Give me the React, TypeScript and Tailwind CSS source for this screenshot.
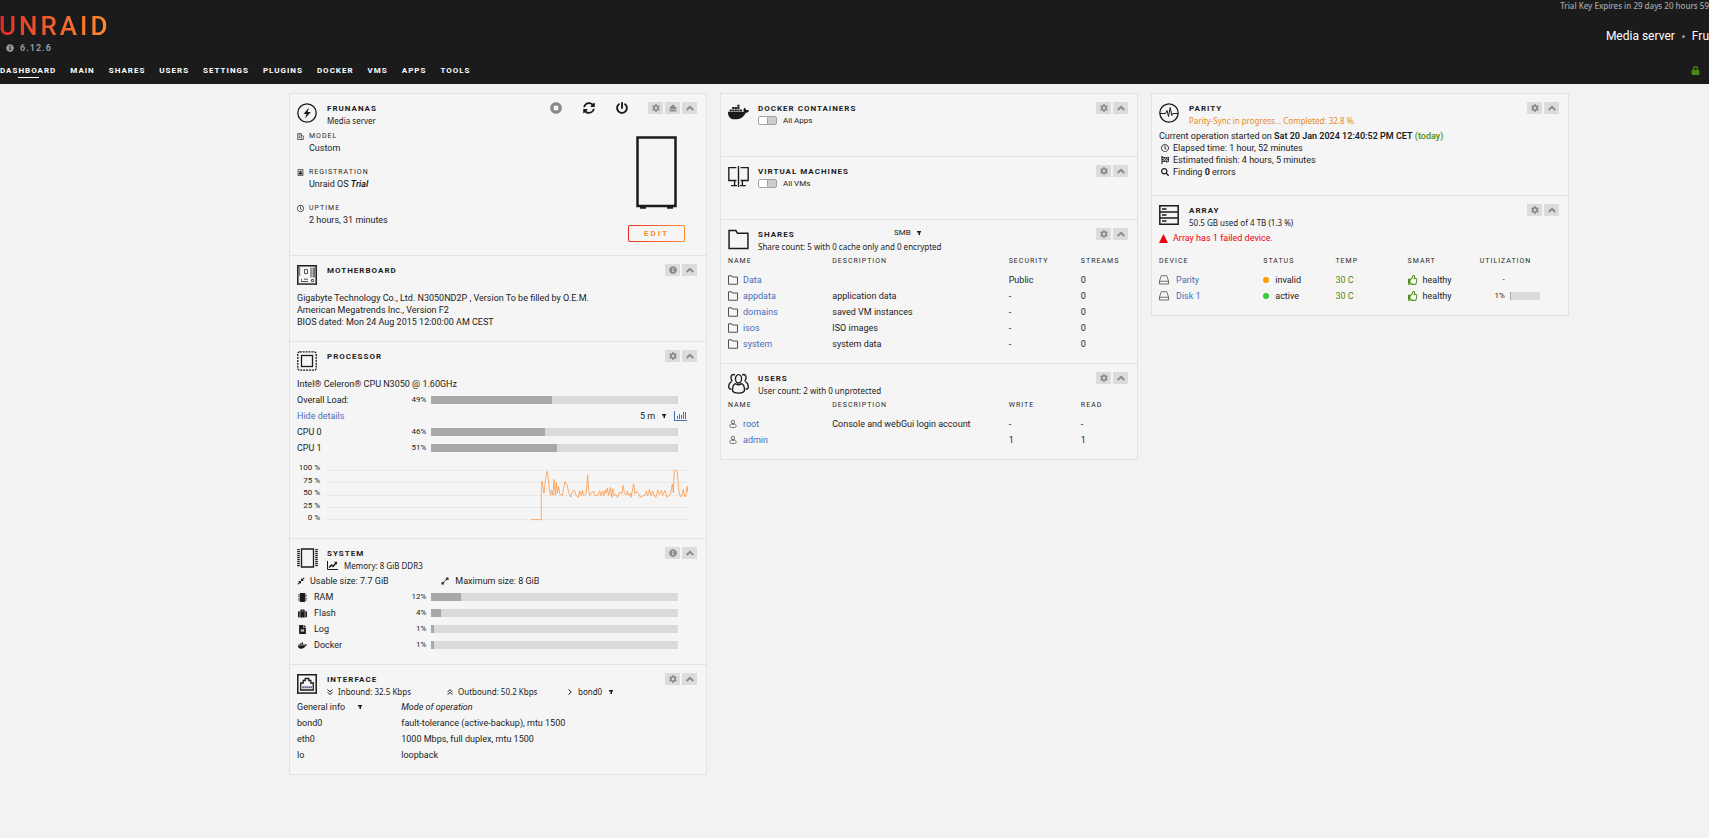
import type { ReactNode } from 'react';
import {
    FaCog,
    FaCompressAlt,
    FaDocker,
    FaEject,
    FaExpandAlt,
    FaFileAlt,
    FaFlagCheckered,
    FaInfoCircle,
    FaLock,
    FaPowerOff,
    FaRegClock,
    FaRegThumbsUp,
    FaSearch,
    FaStopCircle,
    FaSuitcase,
    FaSyncAlt,
    FaMicrochip,
} from 'react-icons/fa';

const menu = ['Dashboard', 'Main', 'Shares', 'Users', 'Settings', 'Plugins', 'Docker', 'VMs', 'Apps', 'Tools'];

const shares = [
    { name: 'Data', description: '', security: 'Public', streams: 0 },
    { name: 'appdata', description: 'application data', security: '-', streams: 0 },
    { name: 'domains', description: 'saved VM instances', security: '-', streams: 0 },
    { name: 'isos', description: 'ISO images', security: '-', streams: 0 },
    { name: 'system', description: 'system data', security: '-', streams: 0 },
];

const users = [
    { name: 'root', description: 'Console and webGui login account', write: '-', read: '-' },
    { name: 'admin', description: '', write: '1', read: '1' },
];

const devices = [
    { name: 'Parity', status: 'invalid', dot: 'bg-[#ff9900]', temp: '30 C', smart: 'healthy', used: null },
    { name: 'Disk 1', status: 'active', dot: 'bg-[#33cc33]', temp: '30 C', smart: 'healthy', used: 1 },
];

const memory = [
    { name: 'RAM', icon: FaMicrochip, value: 12 },
    { name: 'Flash', icon: FaSuitcase, value: 4 },
    { name: 'Log', icon: FaFileAlt, value: 1 },
    { name: 'Docker', icon: FaDocker, value: 1 },
];

const interfaces = [
    { name: 'bond0', mode: 'fault-tolerance (active-backup), mtu 1500' },
    { name: 'eth0', mode: '1000 Mbps, full duplex, mtu 1500' },
    { name: 'lo', mode: 'loopback' },
];

const cpuHistory =
    '615,173 646,173 646,84 648,57 654,94 659,49 663,28 667,49 670,84 674,100 677,84 681,100 684,52 688,100 691,61 694,94 698,74 701,96 709,100 713,79 717,59 723,69 729,94 734,105 739,90 745,84 750,100 757,106 761,87 765,100 769,85 773,101 781,94 785,40 788,84 791,100 797,92 803,87 807,101 817,99 821,86 825,101 830,87 834,100 838,84 841,94 844,79 848,100 853,76 857,106 860,80 865,101 869,97 875,106 880,90 887,96 891,70 895,93 901,99 904,87 908,100 913,94 915,106 923,66 927,96 932,87 937,94 943,106 949,102 957,100 961,87 965,101 970,82 975,101 980,87 985,102 990,106 995,84 1000,98 1006,85 1010,100 1017,85 1023,106 1033,98 1039,66 1042,92 1045,26 1049,24 1054,28 1058,84 1063,104 1068,101 1072,82 1076,105 1080,100 1083,73 1086,92';

const labelClass = 'text-[7px] leading-[13px] tracking-[1px] uppercase text-[#282828]';
const linkClass = 'text-[#486dba] hover:underline';

/* ---------- icons ---------- */

function Line({ children, className = 'size-5' }: { children: ReactNode; className?: string }) {
    return (
        <svg viewBox="0 0 20 20" className={className} fill="none" stroke="currentColor" strokeWidth="1.5" aria-hidden="true">
            {children}
        </svg>
    );
}

const ServerIcon = () => (
    <Line>
        <circle cx="10" cy="10" r="9.2" strokeWidth="1.3" />
        <path d="M12 4.5 6.5 11h3L8 15.5 13.8 9h-3.2z" fill="currentColor" stroke="none" />
    </Line>
);

const BoardIcon = () => (
    <Line>
        <path d="M.8.8h18.4v18.4H.8z" />
        <path d="M13 2.5h2.2v10H13z" fill="#999" stroke="none" />
        <path d="M15.600 2.500H18v10h-2.400z" fill="#777" stroke="none" />
        <path d="M7.500 4.500h3v4h-3zM14.500 14.500h2v2h-2z" strokeWidth="1" stroke="#555" />
        <path d="M4.500 14v2.500H11M7 14.200h4" strokeWidth="1" stroke="#555" />
        <path d="M2.500 2.500v8.500" strokeWidth="1.500" strokeDasharray="1 1" />
        <path d="M1 18.800h18" stroke="#666" strokeWidth="1.800" />
    </Line>
);

const CpuIcon = () => (
    <Line>
        <rect x=".8" y=".8" width="18.400" height="18.400" rx="2" strokeDasharray="2 .9" strokeWidth="1.300" />
        <rect x="4.500" y="4.500" width="11" height="11" strokeWidth="1.300" />
    </Line>
);

const RamIcon = () => (
    <Line className="h-5 w-[21px]">
        <path d="M4 1h12v18H4z" strokeWidth="1.300" />
        <path d="M1 1v18M19 1v18" strokeWidth="2.500" strokeDasharray="1.300 .7" />
    </Line>
);

const EthernetIcon = () => (
    <Line>
        <path d="M.8.8h18.400v18.400H.8z" />
        <path d="M3.700 16V9h2.500V6.500h2V4.500h3.600v2h2V9h2.500v7z" strokeWidth="1.300" />
        <path d="M5.500 13.300h9.500" stroke="#1f2d6b" strokeWidth="2" strokeDasharray="1.200 .8" />
        <path d="M1 19h18" stroke="#555" strokeWidth="1.500" />
    </Line>
);

const VmIcon = () => (
    <Line className="size-[21px]">
        <path d="M8 1.500H.8v12.300H8M12 1.500h7.200v12.300H12M10 0v20" strokeWidth="1.300" />
        <path d="M6.300 14v4.500M13.700 14v4.500M3 18.700h5.500M11.500 18.700H17" strokeWidth="1.300" />
    </Line>
);

const FolderIcon = ({ className, strokeWidth = 1.4 }: { className?: string; strokeWidth?: number }) => (
    <Line className={className}>
        <path d="M1 1.500h6.500l1.500 2.500h10v14.500H1z" strokeWidth={strokeWidth} />
    </Line>
);

const UsersIcon = () => (
    <Line className="size-[21px]">
        <g strokeWidth="1.300">
            <ellipse cx="10" cy="5.500" rx="2.900" ry="4" />
            <path d="M7.300 10.200c-2 .6-3 2-3 6 0 1.800 2.500 3 5.700 3s5.700-1.200 5.700-3c0-4-1-5.400-3-6-1.700 1.300-3.700 1.300-5.400 0z" />
            <path d="M6.500 2C4.500.6 2.700 2 2.800 4.500c0 1.500.6 2.700 1.400 3.400M13.500 2c2-1.400 3.800 0 3.700 2.500 0 1.500-.6 2.700-1.400 3.400" />
            <path d="M3.500 8.200C1.500 9 .7 10.500.7 13.500c0 1 .9 1.700 2.600 2M16.500 8.200c2 .8 2.800 2.300 2.800 5.300 0 1-.9 1.700-2.600 2" />
        </g>
    </Line>
);

const PulseIcon = () => (
    <Line>
        <circle cx="10" cy="10" r="9.200" strokeWidth="1.300" />
        <path d="M1 10.500h5.500L8 7.500l1.500 6 1.700-9 1.600 8 1-2H19" strokeWidth="1" />
    </Line>
);

const ArrayIcon = () => (
    <Line>
        <path d="M.8.8h18.400v18.400H.8zM.8 7h18.400M.8 13h18.400" />
        <path d="M3 4h4.500M3 10h4.500M3 16h4.500" strokeWidth="1.300" />
    </Line>
);

const UserIcon = () => (
    <Line className="h-[10px] w-2 text-[#505050]">
        <ellipse cx="10" cy="5" rx="4" ry="4.500" strokeWidth="2" />
        <path d="M6 10c-3 1-4 3-4 5.500C2 18 5 19 10 19s8-1 8-3.500c0-2.500-1-4.500-4-5.500-2.500 1.800-5.500 1.800-8 0z" strokeWidth="2" />
    </Line>
);

const DiskIcon = () => (
    <Line className="size-[10px] text-[#606060]">
        <path d="M4.500 1.500h11L19 12v6H1v-6zM1 12.500h18" strokeWidth="1.800" />
    </Line>
);

const CaseIcon = () => (
    <svg viewBox="0 0 41 73" className="h-[73px] w-[41px]" aria-hidden="true">
        <path d="M1.500 1.500h38v68.500h-38z" fill="none" stroke="#1c1b1b" strokeWidth="2.500" />
        <path d="M4 71.500h6M31 71.500h6" stroke="#1c1b1b" strokeWidth="2.500" />
    </svg>
);

const BarsIcon = () => (
    <svg viewBox="0 0 13 10" className="h-[10px] w-[13px]" fill="none" stroke="#486dba" shapeRendering="crispEdges" aria-hidden="true">
        <path d="M.5 0v9.500H13" />
        <path d="M3.500 5v3M5.500 3v5M7.500 4v4M9.500 1v7M11.500 1v7" strokeWidth="1" />
    </svg>
);

const TrendIcon = () => (
    <svg viewBox="0 0 11 9" className="h-[9px] w-[11px]" fill="none" stroke="currentColor" aria-hidden="true">
        <path d="M.5 0v8.500H11" />
        <path d="M2 6.500 4.500 4 6 5.500l3-3.500" strokeWidth="1.500" />
        <path d="M7 .8h3v3z" fill="currentColor" stroke="none" />
    </svg>
);

const ChevronUpIcon = ({ className }: { className?: string }) => (
    <svg viewBox="0 0 8 8" className={className} fill="none" stroke="currentColor" strokeWidth="2" aria-hidden="true">
        <path d="M.7 6 4 2.800 7.300 6" />
    </svg>
);

const Chevrons = ({ up }: { up?: boolean }) => (
    <svg viewBox="0 0 6 6" className="size-[6px]" fill="none" stroke="currentColor" strokeWidth="1" aria-hidden="true">
        <path d={up ? 'M.5 3 3 .7 5.500 3M.5 5.700 3 3.400l2.500 2.300' : 'M.5.5 3 2.800 5.500.5M.5 3.200 3 5.500l2.500-2.300'} />
    </svg>
);

/* ---------- shared pieces ---------- */

function SmallSelect({ label, value, className = '', arrow = 'ml-[6px]' }: { label: string; value: string; className?: string; arrow?: string }) {
    return (
        <label className={`inline-flex items-center ${className}`}>
            <select aria-label={label} className="appearance-none bg-transparent outline-none">
                <option>{value}</option>
            </select>
            <svg viewBox="0 0 4 4" className={`size-1 ${arrow}`} aria-hidden="true">
                <path d="M0 0h4v1.500H3V4H1.500V1.500H0z" fill="#1c1b1b" />
            </svg>
        </label>
    );
}

const tools = {
    settings: FaCog,
    info: FaInfoCircle,
    eject: FaEject,
    collapse: ChevronUpIcon,
};

type Tool = keyof typeof tools;

interface TileProps {
    icon: ReactNode;
    title: string;
    subtitle?: ReactNode;
    controls?: Tool[];
    extra?: ReactNode;
    children?: ReactNode;
}

function Tile({ icon, title, subtitle, controls = ['settings'], extra, children }: TileProps) {
    return (
        <section className="pt-2 pr-2 pb-[11px] pl-[7px]">
            <header className="flex h-[26px] items-start">
                <div className="mt-px w-5 shrink-0">{icon}</div>
                <div className="ml-[10px] min-w-0 flex-1 whitespace-nowrap">
                    <h2 className="text-[8px] leading-[13px] font-bold tracking-[1px] uppercase">{title}</h2>
                    <div className="font-['Noto_Sans',sans-serif] text-[8px] leading-[11px]">{subtitle}</div>
                </div>
                {extra}
                <div className="mr-px flex gap-[2px]">
                    {[...controls, 'collapse' as Tool].map((name) => {
                        const Icon = tools[name];
                        return (
                            <button
                                key={name}
                                aria-label={`${title} ${name}`}
                                className="flex h-3 w-[15px] items-center justify-center bg-[#dcdcdc] text-[#8b8b8b] hover:text-[#1c1b1b]"
                            >
                                <Icon className="size-2" />
                            </button>
                        );
                    })}
                </div>
            </header>
            {children}
        </section>
    );
}

function Column({ children }: { children: ReactNode }) {
    return <div className="divide-y divide-[#e2e2e2] self-start border border-[#e2e2e2] bg-[#f5f5f5]">{children}</div>;
}

function Meter({ label, value }: { label: ReactNode; value: number }) {
    return (
        <div className="flex h-4 items-center">
            <div className="w-[26%]">{label}</div>
            <div className="w-[25px] text-right text-[8px]">{value}%</div>
            <div className="mr-5 ml-[5px] h-2 flex-1 bg-[#dadada]">
                <div className="h-full bg-[#a8a8a8]" style={{ width: `${value}%` }} />
            </div>
        </div>
    );
}

function Toggle({ label }: { label: string }) {
    return (
        <label className="mt-px flex items-center">
            <input type="checkbox" className="peer sr-only" />
            <span className="flex h-[9px] w-[19px] rounded-[2px] border border-[#a0a0a0] bg-[#cccccc] peer-checked:justify-end">
                <span className="w-[9px] rounded-[1px] border-r border-[#a0a0a0] bg-white" />
            </span>
            <span className="ml-[6px] font-['Roboto',sans-serif] leading-[9px]">{label}</span>
        </label>
    );
}

function Fact({ icon, label, children }: { icon: ReactNode; label: string; children: ReactNode }) {
    return (
        <div className="flex">
            <div className="mt-[3px] w-3 shrink-0">{icon}</div>
            <dl>
                <dt className={labelClass}>{label}</dt>
                <dd className="leading-[11px]">{children}</dd>
            </dl>
        </div>
    );
}

function Table({ head, children }: { head: [string, string][]; children: ReactNode }) {
    return (
        <table className="w-full table-fixed text-left">
            <thead>
                <tr className="h-[18px]">
                    {head.map(([title, width]) => (
                        <th key={title} className={`px-0 pt-px pb-0 align-top font-normal ${labelClass} ${width}`}>
                            {title}
                        </th>
                    ))}
                </tr>
            </thead>
            <tbody>{children}</tbody>
        </table>
    );
}

/* ---------- page ---------- */

export default function App() {
    return (
        <div className="min-h-screen overflow-x-hidden bg-[#f2f2f2] pb-16 font-['Roboto',sans-serif] text-[9px] leading-3 text-[#1c1b1b]">
            <header className="flex h-[84px] justify-between bg-[#1c1b1b] text-white">
                <div>
                    <a
                        href="#"
                        className="mt-[11px] -ml-px block w-fit bg-gradient-to-r from-[#e22828] to-[#ff8c2f] bg-clip-text text-[26px] leading-[30px] font-medium tracking-[3px] text-transparent"
                    >
                        UNRAID
                    </a>
                    <div className="mt-px ml-[6px] flex items-center gap-[6px] leading-3 font-bold tracking-[1px] text-[#999999]">
                        <FaInfoCircle className="size-2" />
                        6.12.6
                    </div>
                    <nav className="mt-[10px] flex gap-[14px]">
                        {menu.map((item, i) => (
                            <a key={item} href="#" className="flex flex-col items-center text-[8px] leading-[13px] font-bold tracking-[1px] uppercase">
                                {item}
                                {i === 0 && <span className="h-px w-[21px] bg-white" />}
                            </a>
                        ))}
                    </nav>
                </div>
                <div className="flex flex-col items-end">
                    <div className="font-['Noto_Sans',sans-serif] text-[8px] leading-3 font-medium text-[#a6a6a6]">
                        Trial Key Expires in 29 days 20 hours 59
                    </div>
                    <div className="mt-4 flex items-center text-[12px] leading-4">
                        Media server
                        <span className="mx-[7px] size-[3px] rounded-full bg-[#999999]" />
                        Fru
                    </div>
                    <FaLock className="mt-[22px] mr-[9px] size-[9px] text-[#4f8a10]" />
                </div>
            </header>

            <main className="mt-[9px] mr-[140px] ml-[289px] grid grid-cols-3 gap-[13px]">
                <Column>
                    <Tile
                        icon={<ServerIcon />}
                        title="Frunanas"
                        subtitle="Media server"
                        controls={['settings', 'eject']}
                        extra={
                            <div className="mr-5 flex gap-[21px]">
                                <button aria-label="Stop array" className="text-[#888888]">
                                    <FaStopCircle className="size-3" />
                                </button>
                                <button aria-label="Reboot">
                                    <FaSyncAlt className="size-3" />
                                </button>
                                <button aria-label="Power down">
                                    <FaPowerOff className="size-3" />
                                </button>
                            </div>
                        }
                    >
                        <div className="mb-[2px] flex justify-between">
                            <div className="mt-[2px] flex flex-col gap-3">
                                <Fact
                                    label="Model"
                                    icon={
                                        <Line className="size-[7px]">
                                            <path d="M2 1h10v18H2zM12 6l6 3v10h-6M5 5h4M5 9h4M5 13h4" strokeWidth="2" />
                                        </Line>
                                    }
                                >
                                    Custom
                                </Fact>
                                <Fact
                                    label="Registration"
                                    icon={
                                        <Line className="size-[7px]">
                                            <path d="M3 1h14v18H3z" strokeWidth="2" />
                                            <path d="M7 5h6v5H7zM5 11h10v5H5z" fill="currentColor" stroke="none" />
                                        </Line>
                                    }
                                >
                                    Unraid OS <strong className="font-semibold italic">Trial</strong>
                                </Fact>
                                <Fact label="Uptime" icon={<FaRegClock className="size-[7px]" />}>
                                    2 hours, 31 minutes
                                </Fact>
                            </div>
                            <div className="mt-2 mr-[13px] flex flex-col items-center gap-4">
                                <CaseIcon />
                                <button className="h-[17px] w-[57px] rounded-[2px] bg-gradient-to-r from-[#e22828] to-[#ff8c2f] p-px">
                                    <span className="flex h-full items-center justify-center rounded-[1px] bg-[#f5f5f5] text-[8px] font-bold tracking-[2px] text-[#ff8c2f] uppercase">
                                        Edit
                                    </span>
                                </button>
                            </div>
                        </div>
                    </Tile>

                    <Tile icon={<BoardIcon />} title="Motherboard" controls={['info']}>
                        <div className="my-[2px]">
                            <p>Gigabyte Technology Co., Ltd. N3050ND2P , Version To be filled by O.E.M.</p>
                            <p>American Megatrends Inc., Version F2</p>
                            <p>BIOS dated: Mon 24 Aug 2015 12:00:00 AM CEST</p>
                        </div>
                    </Tile>

                    <Tile icon={<CpuIcon />} title="Processor">
                        <p className="leading-4">Intel® Celeron® CPU N3050 @ 1.60GHz</p>
                        <Meter label="Overall Load:" value={49} />
                        <div className="flex h-4 items-center">
                            <a href="#" className={`flex-1 ${linkClass}`}>
                                Hide details
                            </a>
                            <SmallSelect label="Time span" value="5 m" />
                            <button aria-label="Toggle graph" className="mr-[11px] ml-2">
                                <BarsIcon />
                            </button>
                        </div>
                        <Meter label="CPU 0" value={46} />
                        <Meter label="CPU 1" value={51} />
                        <div className="mt-[6px] mb-[3px] flex">
                            <div className="flex h-[62px] w-[23px] flex-col justify-between text-right text-[8px] leading-3">
                                {[100, 75, 50, 25, 0].map((tick) => (
                                    <span key={tick}>{tick} %</span>
                                ))}
                            </div>
                            <svg
                                viewBox="0 0 1086 186"
                                preserveAspectRatio="none"
                                className="mr-[10px] ml-[6px] h-[62px] min-w-0 flex-1"
                                fill="none"
                                role="img"
                                aria-label="CPU load"
                            >
                                <path d="M0 25.500h1086M0 61.500h1086M0 100.500h1086M0 136.500h1086M0 172.500h1086" stroke="#e8e8e8" vectorEffect="non-scaling-stroke" />
                                <polyline points={cpuHistory} stroke="#ff8c2f" strokeOpacity=".7" vectorEffect="non-scaling-stroke" />
                            </svg>
                        </div>
                    </Tile>

                    <Tile
                        icon={<RamIcon />}
                        title="System"
                        controls={['info']}
                        subtitle={
                            <span className="flex items-center gap-[6px]">
                                <TrendIcon />
                                Memory: 8 GiB DDR3
                            </span>
                        }
                    >
                        <div className="flex h-4 items-center">
                            <span className="flex w-[36%] items-center gap-[5px]">
                                <FaCompressAlt className="size-2" />
                                Usable size: 7.7 GiB
                            </span>
                            <span className="flex items-center gap-[6px]">
                                <FaExpandAlt className="size-2" />
                                Maximum size: 8 GiB
                            </span>
                        </div>
                        {memory.map(({ name, icon: Icon, value }) => (
                            <Meter
                                key={name}
                                value={value}
                                label={
                                    <span className="ml-px flex items-center gap-[7px]">
                                        <Icon className="size-[9px]" />
                                        {name}
                                    </span>
                                }
                            />
                        ))}
                    </Tile>

                    <Tile
                        icon={<EthernetIcon />}
                        title="Interface"
                        subtitle={
                            <span className="flex items-center">
                                <span className="flex w-[120px] items-center gap-[5px]">
                                    <Chevrons />
                                    Inbound: 32.5 Kbps
                                </span>
                                <span className="flex w-[121px] items-center gap-[5px]">
                                    <Chevrons up />
                                    Outbound: 50.2 Kbps
                                </span>
                                <svg viewBox="0 0 4 6" className="mr-[6px] h-[6px] w-1" fill="none" stroke="currentColor" aria-hidden="true">
                                    <path d="M.5.5 3.300 3 .5 5.500" />
                                </svg>
                                <SmallSelect label="Port" value="bond0" />
                            </span>
                        }
                    >
                        <div className="flex h-4 items-center">
                            <SmallSelect label="View" value="General info" className="w-[26%]" arrow="ml-3" />
                            <em>Mode of operation</em>
                        </div>
                        {interfaces.map((port) => (
                            <div key={port.name} className="flex h-4 items-center">
                                <span className="w-[26%]">{port.name}</span>
                                {port.mode}
                            </div>
                        ))}
                    </Tile>
                </Column>

                <Column>
                    <Tile icon={<FaDocker className="h-[18px] w-[21px]" />} title="Docker Containers" subtitle={<Toggle label="All Apps" />}>
                        <div className="h-[17px]" />
                    </Tile>

                    <Tile icon={<VmIcon />} title="Virtual Machines" subtitle={<Toggle label="All VMs" />}>
                        <div className="h-[17px]" />
                    </Tile>

                    <Tile
                        icon={<FolderIcon className="size-[21px]" />}
                        title="Shares"
                        subtitle="Share count: 5 with 0 cache only and 0 encrypted"
                        extra={<SmallSelect label="Protocol" value="SMB" className="mr-[175px] text-[8px] leading-[10px]" />}
                    >
                        <Table
                            head={[
                                ['Name', 'w-[26%]'],
                                ['Description', 'w-[44%]'],
                                ['Security', 'w-[18%]'],
                                ['Streams', 'w-[12%]'],
                            ]}
                        >
                            {shares.map((share) => (
                                <tr key={share.name} className="h-4">
                                    <td className="p-0">
                                        <span className="flex items-center gap-[5px]">
                                            <FolderIcon className="size-[10px] text-[#505050]" strokeWidth={2} />
                                            <a href="#" className={linkClass}>
                                                {share.name}
                                            </a>
                                        </span>
                                    </td>
                                    <td className="p-0">{share.description}</td>
                                    <td className="p-0">{share.security}</td>
                                    <td className="p-0">{share.streams}</td>
                                </tr>
                            ))}
                        </Table>
                    </Tile>

                    <Tile icon={<UsersIcon />} title="Users" subtitle="User count: 2 with 0 unprotected">
                        <Table
                            head={[
                                ['Name', 'w-[26%]'],
                                ['Description', 'w-[44%]'],
                                ['Write', 'w-[18%]'],
                                ['Read', 'w-[12%]'],
                            ]}
                        >
                            {users.map((user) => (
                                <tr key={user.name} className="h-4">
                                    <td className="p-0">
                                        <span className="ml-px flex items-center gap-[6px]">
                                            <UserIcon />
                                            <a href="#" className={linkClass}>
                                                {user.name}
                                            </a>
                                        </span>
                                    </td>
                                    <td className="p-0">{user.description}</td>
                                    <td className="p-0">{user.write}</td>
                                    <td className="p-0">{user.read}</td>
                                </tr>
                            ))}
                        </Table>
                    </Tile>
                </Column>

                <Column>
                    <Tile
                        icon={<PulseIcon />}
                        title="Parity"
                        subtitle={<span className="text-[#e68a1e]">Parity-Sync in progress... Completed: 32.8 %.</span>}
                    >
                        <div className="mt-[2px] mb-[6px]">
                            <p>
                                Current operation started on <strong className="font-semibold">Sat 20 Jan 2024 12:40:52 PM CET</strong>{' '}
                                <span className="font-medium text-[#4f8a10]">(today)</span>
                            </p>
                            <p className="ml-[2px] flex items-center gap-1">
                                <FaRegClock className="size-2" />
                                Elapsed time: 1 hour, 52 minutes
                            </p>
                            <p className="ml-[2px] flex items-center gap-1">
                                <FaFlagCheckered className="size-2" />
                                Estimated finish: 4 hours, 5 minutes
                            </p>
                            <p className="ml-[2px] flex items-center gap-1">
                                <FaSearch className="size-2" />
                                <span>
                                    Finding <strong>0</strong> errors
                                </span>
                            </p>
                        </div>
                    </Tile>

                    <Tile icon={<ArrayIcon />} title="Array" subtitle="50.5 GB used of 4 TB (1.3 %)">
                        <p className="mb-2 flex h-4 items-center gap-[5px] text-[#f0000c]">
                            <svg viewBox="0 0 9 9" className="size-[9px]" aria-hidden="true">
                                <path d="M4.500 0 9 9H0z" fill="currentColor" />
                            </svg>
                            Array has 1 failed device.
                        </p>
                        <Table
                            head={[
                                ['Device', 'w-[26%]'],
                                ['Status', 'w-[18%]'],
                                ['Temp', 'w-[18%]'],
                                ['Smart', 'w-[18%]'],
                                ['Utilization', 'w-[20%]'],
                            ]}
                        >
                            {devices.map((device) => (
                                <tr key={device.name} className="h-4">
                                    <td className="p-0">
                                        <span className="flex items-center gap-[7px]">
                                            <DiskIcon />
                                            <a href="#" className={linkClass}>
                                                {device.name}
                                            </a>
                                        </span>
                                    </td>
                                    <td className="p-0">
                                        <span className="flex items-center gap-[6px]">
                                            <span className={`size-[6px] rounded-full ${device.dot}`} />
                                            {device.status}
                                        </span>
                                    </td>
                                    <td className="p-0 text-[#4f8a10]">{device.temp}</td>
                                    <td className="p-0">
                                        <span className="flex items-center gap-[5px]">
                                            <FaRegThumbsUp className="size-[10px] text-[#4f8a10]" />
                                            {device.smart}
                                        </span>
                                    </td>
                                    <td className="p-0">
                                        <span className="flex items-center">
                                            <span className="w-[25px] text-right text-[8px]">{device.used === null ? '-' : `${device.used}%`}</span>
                                            {device.used !== null && (
                                                <span className="ml-[5px] h-2 w-[30px] bg-[#dadada]">
                                                    <span className="block h-full min-w-px bg-[#a8a8a8]" style={{ width: `${device.used}%` }} />
                                                </span>
                                            )}
                                        </span>
                                    </td>
                                </tr>
                            ))}
                        </Table>
                    </Tile>
                </Column>
            </main>
        </div>
    );
}
